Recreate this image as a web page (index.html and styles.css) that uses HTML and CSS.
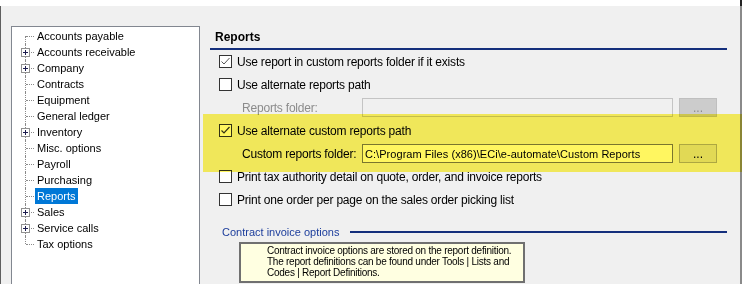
FILE: index.html
```html
<!DOCTYPE html>
<html lang="en">
<head>
  <meta charset="UTF-8" />
  <title>Options - Reports</title>
  <link rel="stylesheet" href="styles.css">
</head>
<body>
  <div class="window">
    <div class="topbar"></div>
    <div class="frame">
      <ul class="tree">
        <li class="node first"><span class="gutter"></span><span class="label">Accounts payable</span></li>
        <li class="node"><span class="gutter"><span class="expander"></span></span><span class="label">Accounts receivable</span></li>
        <li class="node"><span class="gutter"><span class="expander"></span></span><span class="label">Company</span></li>
        <li class="node"><span class="gutter"></span><span class="label">Contracts</span></li>
        <li class="node"><span class="gutter"></span><span class="label">Equipment</span></li>
        <li class="node"><span class="gutter"></span><span class="label">General ledger</span></li>
        <li class="node"><span class="gutter"><span class="expander"></span></span><span class="label">Inventory</span></li>
        <li class="node"><span class="gutter"></span><span class="label">Misc. options</span></li>
        <li class="node"><span class="gutter"></span><span class="label">Payroll</span></li>
        <li class="node"><span class="gutter"></span><span class="label">Purchasing</span></li>
        <li class="node"><span class="gutter"></span><span class="label selected">Reports</span></li>
        <li class="node"><span class="gutter"><span class="expander"></span></span><span class="label">Sales</span></li>
        <li class="node"><span class="gutter"><span class="expander"></span></span><span class="label">Service calls</span></li>
        <li class="node last"><span class="gutter"></span><span class="label">Tax options</span></li>
      </ul>

      <div class="settings">
        <div class="highlight"></div>
        <h2 class="section-title">Reports</h2>
        <div class="rule"></div>

        <div class="option">
          <span class="check"><svg width="11" height="11" viewBox="0 0 11 11"><polyline points="1.5,5.5 4,8 9.5,2" fill="none" stroke="#555" stroke-width="1"/></svg></span>
          <span>Use report in custom reports folder if it exists</span>
        </div>
        <div class="option">
          <span class="check"></span>
          <span>Use alternate reports path</span>
        </div>
        <div class="path-row disabled">
          <span class="path-label">Reports folder:</span>
          <input class="path-input" type="text" value="" disabled>
          <button class="browse" disabled>...</button>
        </div>
        <div class="option">
          <span class="check"><svg width="11" height="11" viewBox="0 0 11 11"><polyline points="1.5,5.5 4,8 9.5,2" fill="none" stroke="#333" stroke-width="1.2"/></svg></span>
          <span>Use alternate custom reports path</span>
        </div>
        <div class="path-row">
          <span class="path-label">Custom reports folder:</span>
          <input class="path-input" type="text" value="C:\Program Files (x86)\ECi\e-automate\Custom Reports">
          <button class="browse">...</button>
        </div>
        <div class="option">
          <span class="check"></span>
          <span>Print tax authority detail on quote, order, and invoice reports</span>
        </div>
        <div class="option">
          <span class="check"></span>
          <span>Print one order per page on the sales order picking list</span>
        </div>

        <div class="group-head">
          <span class="group-label">Contract invoice options</span>
          <span class="group-line"></span>
        </div>
        <div class="note">
          Contract invoice options are stored on the report definition.<br>
          The report definitions can be found under Tools | Lists and<br>
          Codes | Report Definitions.
        </div>
      </div>
    </div>
  </div>
</body>
</html>
```

FILE: styles.css
```css
html, body {
  margin: 0;
  padding: 0;
  background: #f0f0f0;
}

.window {
  width: 742px;
  height: 284px;
  overflow: hidden;
  display: flex;
  flex-direction: column;
  font-family: "Liberation Sans", Arial, sans-serif;
  color: #000;
}

.topbar {
  height: 6px;
  flex: none;
  background: #fff;
  border-right: 2px solid #222;
}

.frame {
  flex: 1;
  display: flex;
  border-left: 1px solid #5f5f5f;
  border-right: 2px solid #8a8a8a;
}

/* tree on the left */
.tree {
  list-style: none;
  margin: 20px 0 0 10px;
  padding: 1px 0 0 0;
  width: 189px;
  height: 300px;
  flex: none;
  box-sizing: border-box;
  background: #fff;
  border: 1px solid #828790;
  font-size: 11px;
}

.node {
  display: flex;
  height: 16px;
  line-height: 16px;
  white-space: nowrap;
}

.gutter {
  position: relative;
  width: 23px;
  flex: none;
}

.gutter::before {
  content: "";
  position: absolute;
  left: 13px;
  top: 0;
  bottom: 0;
  border-left: 1px dotted #8a8a8a;
}

.first .gutter::before {
  top: 8px;
}

.last .gutter::before {
  bottom: 8px;
}

.gutter::after {
  content: "";
  position: absolute;
  left: 14px;
  top: 8px;
  width: 8px;
  border-top: 1px dotted #8a8a8a;
}

.expander {
  position: absolute;
  left: 9px;
  top: 4px;
  width: 9px;
  height: 9px;
  box-sizing: border-box;
  border: 1px solid #919191;
  background: #fff;
  z-index: 1;
}

.expander::before,
.expander::after {
  content: "";
  position: absolute;
  background: #1d1d4f;
}

.expander::before {
  left: 1px;
  top: 3px;
  width: 5px;
  height: 1px;
}

.expander::after {
  left: 3px;
  top: 1px;
  width: 1px;
  height: 5px;
}

.label {
  padding: 0 2px;
}

.label.selected {
  background: #0078d7;
  color: #fff;
}

/* settings on the right */
.settings {
  flex: 1;
  position: relative;
  margin-left: 3px;
  padding-top: 23px;
  font-size: 12px;
  letter-spacing: -0.2px;
}

.highlight {
  position: absolute;
  left: 0;
  right: -2px;
  top: 108px;
  height: 58px;
  background: rgb(255, 246, 96);
  mix-blend-mode: multiply;
  pointer-events: none;
  z-index: 2;
}

.section-title {
  margin: 0 0 0 12px;
  font-size: 12px;
  line-height: 16px;
  font-weight: bold;
  letter-spacing: 0;
}

.rule {
  height: 2px;
  margin: 3px 13px 0 7px;
  background: #142f7c;
}

.option {
  display: flex;
  align-items: center;
  gap: 5px;
  height: 23px;
  padding-left: 16px;
  white-space: nowrap;
}

.check {
  width: 13px;
  height: 13px;
  box-sizing: border-box;
  border: 1px solid #333;
  background: #fff;
  flex: none;
  display: flex;
  align-items: center;
  justify-content: center;
}

.path-row {
  display: flex;
  align-items: center;
  height: 23px;
  padding-left: 39px;
}

.path-label {
  width: 120px;
  flex: none;
}

.path-input {
  width: 311px;
  height: 19px;
  box-sizing: border-box;
  margin: 0;
  padding: 0 2px;
  border: 1px solid #7a7a7a;
  background: #fff;
  font: 11px "Liberation Sans", Arial, sans-serif;
  letter-spacing: 0.05px;
  color: #000;
  outline: none;
}

.browse {
  width: 38px;
  height: 19px;
  margin: 0 0 0 6px;
  padding: 0;
  box-sizing: border-box;
  border: 1px solid #adadad;
  background: #e1e1e1;
  font: 12px/12px "Liberation Sans", Arial, sans-serif;
  color: #000;
}

.disabled .path-label {
  color: #8c8c8c;
}

.disabled .path-input {
  border-color: #c4c4c4;
  background: #f0f0f0;
}

.disabled .browse {
  border-color: #bfbfbf;
  background: #cccccc;
  color: #8c8c8c;
}

.group-head {
  display: flex;
  align-items: center;
  height: 16px;
  margin-top: 13px;
  padding-left: 19px;
}

.group-label {
  color: #1c3d9c;
  font-size: 11px;
  letter-spacing: 0;
  white-space: nowrap;
}

.group-line {
  flex: 1;
  height: 2px;
  margin: 0 13px 0 11px;
  background: #142f7c;
}

.note {
  width: 286px;
  box-sizing: border-box;
  margin: 2px 0 0 36px;
  padding: 1px 4px 3px 26px;
  border: 2px solid #707070;
  background: #ffffe1;
  font-size: 10px;
  line-height: 11px;
  letter-spacing: -0.25px;
  white-space: nowrap;
}
```
